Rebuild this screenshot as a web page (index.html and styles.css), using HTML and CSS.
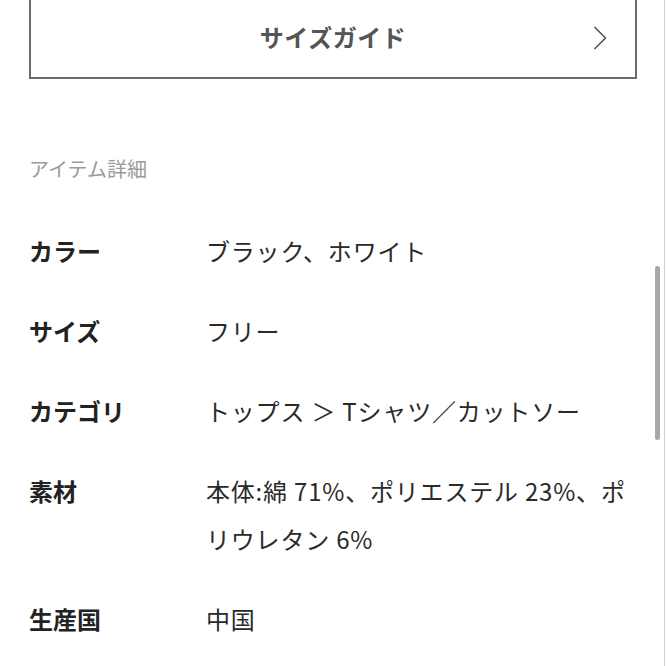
FILE: index.html
```html
<!DOCTYPE html>
<html lang="ja">
<head>
    <meta charset="UTF-8">
    <meta name="viewport" content="width=device-width, initial-scale=1.0">
    <title>アイテム詳細</title>
    <link rel="stylesheet" href="styles.css">
</head>
<body>
    <div class="page">
        <a class="size-guide" href="#">
            <span class="size-guide-label">サイズガイド</span>
            <svg class="chevron" width="14" height="24" viewBox="0 0 14 24">
                <polyline points="1.5,1 12.5,12 1.5,23" fill="none" stroke="#555" stroke-width="1.6"/>
            </svg>
        </a>

        <h3 class="section-title">アイテム詳細</h3>

        <dl class="details">
            <div class="row">
                <dt>カラー</dt>
                <dd>ブラック、ホワイト</dd>
            </div>
            <div class="row">
                <dt>サイズ</dt>
                <dd>フリー</dd>
            </div>
            <div class="row">
                <dt>カテゴリ</dt>
                <dd>トップス ＞ Tシャツ／カットソー</dd>
            </div>
            <div class="row">
                <dt>素材</dt>
                <dd>本体:綿 71%、ポリエステル 23%、ポリウレタン 6%</dd>
            </div>
            <div class="row">
                <dt>生産国</dt>
                <dd>中国</dd>
            </div>
        </dl>
    </div>

    <div class="scroll-track"></div>
    <div class="scroll-thumb"></div>
</body>
</html>
```

FILE: styles.css
```css
body {
    margin: 0;
    padding: 0;
    background: #ffffff;
    font-family: "Noto Sans CJK JP", "Noto Sans", sans-serif;
    color: #333333;
    overflow: hidden;
}
.page {
    padding: 0 29px;
}
.size-guide {
    display: flex;
    align-items: center;
    justify-content: center;
    position: relative;
    margin-top: -8px;
    height: 87px;
    border: 2px solid #6b6b6b;
    text-decoration: none;
    box-sizing: border-box;
}
.size-guide-label {
    font-size: 24px;
    font-weight: bold;
    color: #555555;
    letter-spacing: 0.5px;
    margin-top: 2px;
}
.chevron {
    position: absolute;
    right: 28px;
    top: 32px;
}
.section-title {
    margin: 66px 0 0;
    font-size: 20px;
    font-weight: normal;
    line-height: 48px;
    color: #9a9a9a;
}
.details {
    margin: 34px 0 0;
    display: flex;
    flex-direction: column;
    gap: 32px;
}
.row {
    display: flex;
}
.row dt {
    width: 177px;
    flex-shrink: 0;
    font-size: 24px;
    font-weight: bold;
    line-height: 48px;
    color: #222222;
}
.row dd {
    margin: 0;
    flex: 1;
    font-size: 24px;
    line-height: 48px;
    color: #2a2a2a;
    letter-spacing: 0.8px;
}
.scroll-track {
    position: fixed;
    top: 0;
    right: 1px;
    width: 1px;
    height: 100%;
    background: #d0d0d0;
}
.scroll-thumb {
    position: fixed;
    top: 266px;
    right: 6px;
    width: 5px;
    height: 174px;
    border-radius: 3px;
    background: #a8a8a8;
}
```
